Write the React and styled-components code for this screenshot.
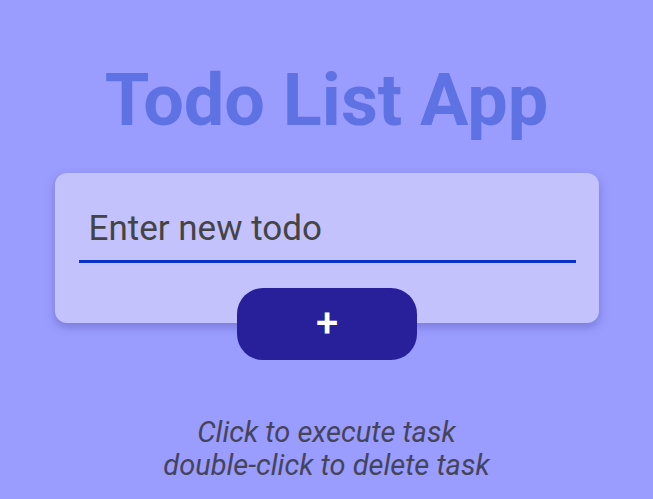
import styled, { createGlobalStyle } from "styled-components";

const GlobalStyle = createGlobalStyle`
  html, body {
    margin: 0;
    padding: 0;
    background: #9a9cfe;
    font-family: Roboto, "Liberation Sans", sans-serif;
  }
`;

const App = () => {
  return (
    <Page>
      <GlobalStyle />
      <Title>Todo List App</Title>
      <Card>
        <TodoInput placeholder="Enter new todo" />
        <AddButton>+</AddButton>
      </Card>
      <Hint>
        Click to execute task
        <br />
        double-click to delete task
      </Hint>
    </Page>
  );
};

export default App;

const Page = styled.div`
  display: flex;
  flex-direction: column;
  align-items: center;
  padding-top: 65px;
  min-height: 100vh;
  box-sizing: border-box;
`;

const Title = styled.h1`
  margin: 0 0 36px;
  font-size: 72px;
  line-height: 1;
  font-weight: 700;
  color: #5f72e3;
`;

const Card = styled.div`
  width: 544px;
  box-sizing: border-box;
  padding: 25px 23px 0 24px;
  background: #c3c2fc;
  border-radius: 12px;
  box-shadow: 0 4px 10px rgba(60, 60, 150, 0.35);
  display: flex;
  flex-direction: column;
  align-items: center;
`;

const TodoInput = styled.input`
  width: 100%;
  box-sizing: border-box;
  padding: 10px 10px 11px;
  border: none;
  border-bottom: 3px solid #0a32c8;
  background: transparent;
  outline: none;
  font-family: Roboto, "Liberation Sans", sans-serif;
  font-size: 35px;
  color: #444;

  &::placeholder {
    color: #444;
    opacity: 1;
  }
`;

const AddButton = styled.button`
  margin: 25px 0 -37px;
  width: 180px;
  height: 72px;
  border: none;
  border-radius: 26px;
  background: #28209a;
  color: #fff;
  font-family: Roboto, "Liberation Sans", sans-serif;
  font-size: 40px;
  font-weight: 500;
  line-height: 1;
  cursor: pointer;
`;

const Hint = styled.p`
  margin: 93px 0 0;
  text-align: center;
  font-style: italic;
  font-size: 29px;
  line-height: 33px;
  color: #44445a;
`;
